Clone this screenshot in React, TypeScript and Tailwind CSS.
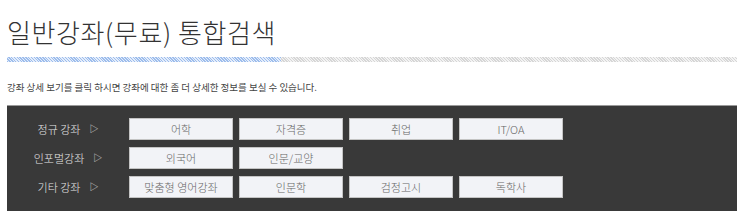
const rows: { label: string; items: string[] }[] = [
  { label: '정규 강좌', items: ['어학', '자격증', '취업', 'IT/OA'] },
  { label: '인포멀강좌', items: ['외국어', '인문/교양'] },
  { label: '기타 강좌', items: ['맞춤형 영어강좌', '인문학', '검정고시', '독학사'] },
]

export default function App() {
  return (
    <div
      className="min-h-[221px] bg-white pl-[7px] pr-[6px] text-[#333]"
      style={{ fontFamily: '"Noto Sans CJK KR", "Noto Sans", sans-serif' }}
    >
      <h1 className="pt-[13px] text-[26px] font-light leading-[38px] tracking-[0.6px] text-[#333]">
        일반강좌(무료) 통합검색
      </h1>

      {/* 줄무늬 구분선 */}
      <div className="mt-[6px] flex h-[5px]">
        <div className="w-[274px] bg-[repeating-linear-gradient(45deg,#9dbdec_0,#9dbdec_1px,#e4edfb_1px,#e4edfb_2px)]" />
        <div className="flex-1 bg-[repeating-linear-gradient(45deg,#d6d6d6_0,#d6d6d6_1px,#f3f3f3_1px,#f3f3f3_2px)]" />
      </div>

      <p className="mt-[18px] text-[9.5px] leading-[14px] text-[#444]">
        강좌 상세 보기를 클릭 하시면 강좌에 대한 좀 더 상세한 정보를 보실 수 있습니다.
      </p>

      <div className="mt-[11px] flex flex-col gap-[7px] border-t border-[#9a9a9a] bg-[#393939] pt-[12px] pb-[13px]">
        {rows.map((row) => (
          <div key={row.label} className="flex items-center">
            <div className="flex w-[122px] items-center justify-center gap-[9px] text-[11px] font-light text-[#e6e6e6]">
              <span>{row.label}</span>
              <span className="text-[9px]">▷</span>
            </div>
            <div className="flex gap-[6px]">
              {row.items.map((item) => (
                <button
                  key={item}
                  className="h-[22px] w-[104px] border border-[#c4c4c4] bg-[#f2f3f7] text-[11px] font-light text-[#666]"
                >
                  {item}
                </button>
              ))}
            </div>
          </div>
        ))}
      </div>
    </div>
  )
}
